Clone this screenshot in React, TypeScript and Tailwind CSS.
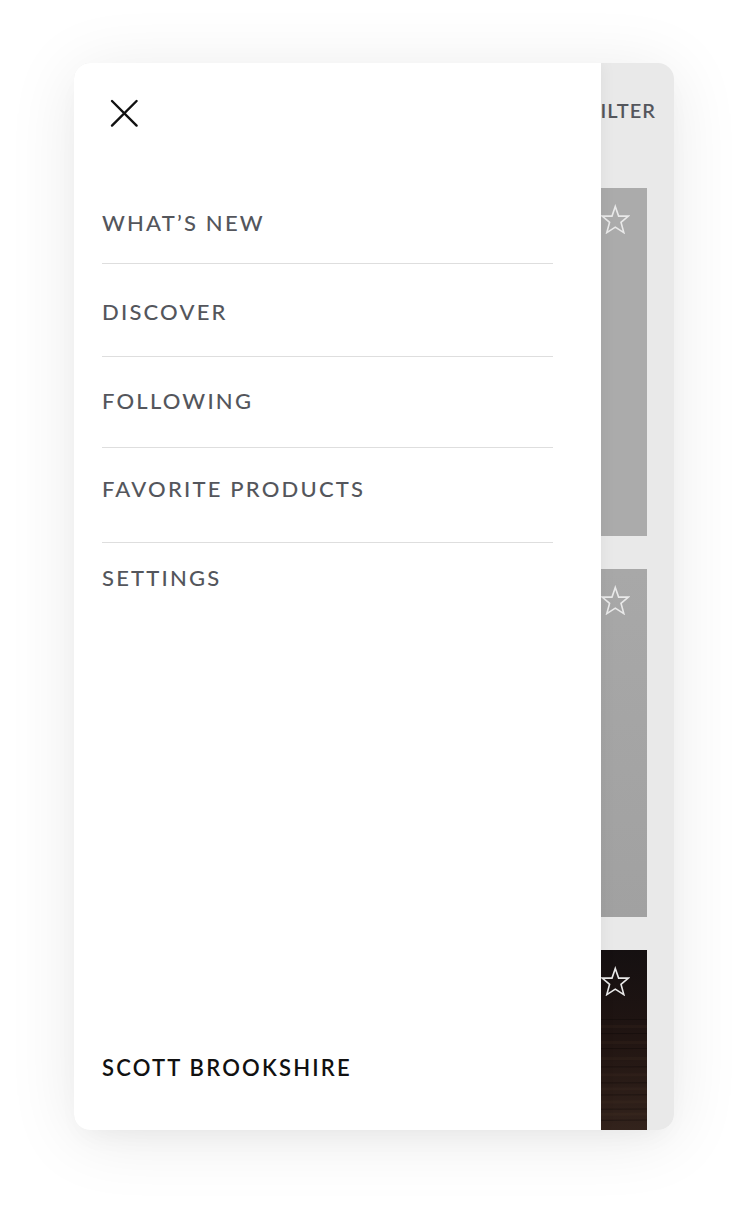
import React from 'react';

const menuItems = [
  { label: 'WHAT’S NEW', spacing: 'pb-6 border-b' },
  { label: 'DISCOVER', spacing: 'pt-8 pb-7 border-b' },
  { label: 'FOLLOWING', spacing: 'pt-7 pb-[30px] border-b' },
  { label: 'FAVORITE PRODUCTS', spacing: 'pt-[25px] pb-[37px] border-b' },
  { label: 'SETTINGS', spacing: 'pt-[19px]' },
];

const products = [
  { id: 1, look: 'h-[348px] bg-[#ababab]' },
  { id: 2, look: 'h-[348px] bg-linear-to-b from-[#a8a8a8] to-[#a1a1a1]' },
  { id: 3, look: 'min-h-[179px] flex-1 bg-linear-to-b from-[#151011] via-[#211512] to-[#33231c]' },
];

function Star() {
  return (
    <svg width="30" height="30" viewBox="0 0 30 30" fill="none" stroke="#e9e9e9" strokeWidth="1.6" aria-hidden="true">
      <path d="M15.3 2.4L18.6 12.1H28.4L21 18.3L23.8 28.6L15.3 23.1L6.8 28.6L9.6 18.3L2.2 12.1H12Z" />
    </svg>
  );
}

function WoodGrain() {
  return (
    <svg className="absolute inset-0 h-full w-full" viewBox="0 0 100 179" preserveAspectRatio="none" fill="none" aria-hidden="true">
      <g stroke="#0d0808" strokeOpacity="0.4" strokeWidth="1">
        <path d="M0 69H100M0 84L100 83M0 99L100 98M0 118L100 116M0 134L100 132M0 147L100 144M0 161L100 158M0 173L100 169" />
      </g>
      <g stroke="#5a4034" strokeOpacity="0.12" strokeWidth="3">
        <path d="M0 76H100M0 92H100M0 109L100 108M0 125L100 124M0 141L100 138M0 155L100 151M0 167L100 163" />
      </g>
    </svg>
  );
}

function Catalog() {
  return (
    <section className="col-start-1 row-start-1 flex min-w-0 flex-col bg-[#e9e9e9]">
      <header className="flex h-[125px] items-start justify-end pt-[31px] pr-[18px]">
        <button type="button" className="text-xl/8 font-semibold tracking-wider text-[#54565c]">
          FILTER
        </button>
      </header>
      <div className="flex flex-1 flex-col gap-[33px] px-[27px]">
        {products.map(({ id, look }) => (
          <article key={id} className={`relative flex items-start justify-end px-[17px] pt-4 ${look}`}>
            {id === 3 && <WoodGrain />}
            <button type="button" aria-label="Favorite" className="relative">
              <Star />
            </button>
          </article>
        ))}
      </div>
    </section>
  );
}

function Drawer() {
  return (
    <aside className="z-10 col-start-1 row-start-1 mr-[73px] flex flex-col bg-white pt-9 pr-12 pb-[46px] pl-7 shadow-[0_0_16px_rgba(0,0,0,0.06)]">
      <button type="button" aria-label="Close menu" className="ml-2 self-start">
        <svg width="30" height="30" viewBox="0 0 30 30" fill="none" stroke="#111" strokeWidth="2.4" strokeLinecap="round" aria-hidden="true">
          <path d="M2 2L26.6 26.6M26.6 2L2 26.6" />
        </svg>
      </button>
      <nav className="mt-[78px]">
        <ul>
          {menuItems.map(({ label, spacing }) => (
            <li key={label} className={`border-[#dedede] ${spacing}`}>
              <a href="#" className="block text-[22px]/8 font-medium tracking-widest text-[#54565c]">
                {label}
              </a>
            </li>
          ))}
        </ul>
      </nav>
      <a href="#" className="mt-auto block text-[22px]/8 font-semibold tracking-widest text-[#111]">
        SCOTT BROOKSHIRE
      </a>
    </aside>
  );
}

export default function App() {
  return (
    <main className="flex min-h-screen flex-col bg-white px-[74px] pt-[63px] pb-[82px] font-['Lato',sans-serif]">
      <div className="flex flex-1 rounded-2xl shadow-[0_8px_70px_rgba(0,0,0,0.09),0_12px_28px_-10px_rgba(0,0,0,0.05)]">
        <div className="grid flex-1 grid-cols-1 overflow-hidden rounded-2xl">
          <Catalog />
          <Drawer />
        </div>
      </div>
    </main>
  );
}
